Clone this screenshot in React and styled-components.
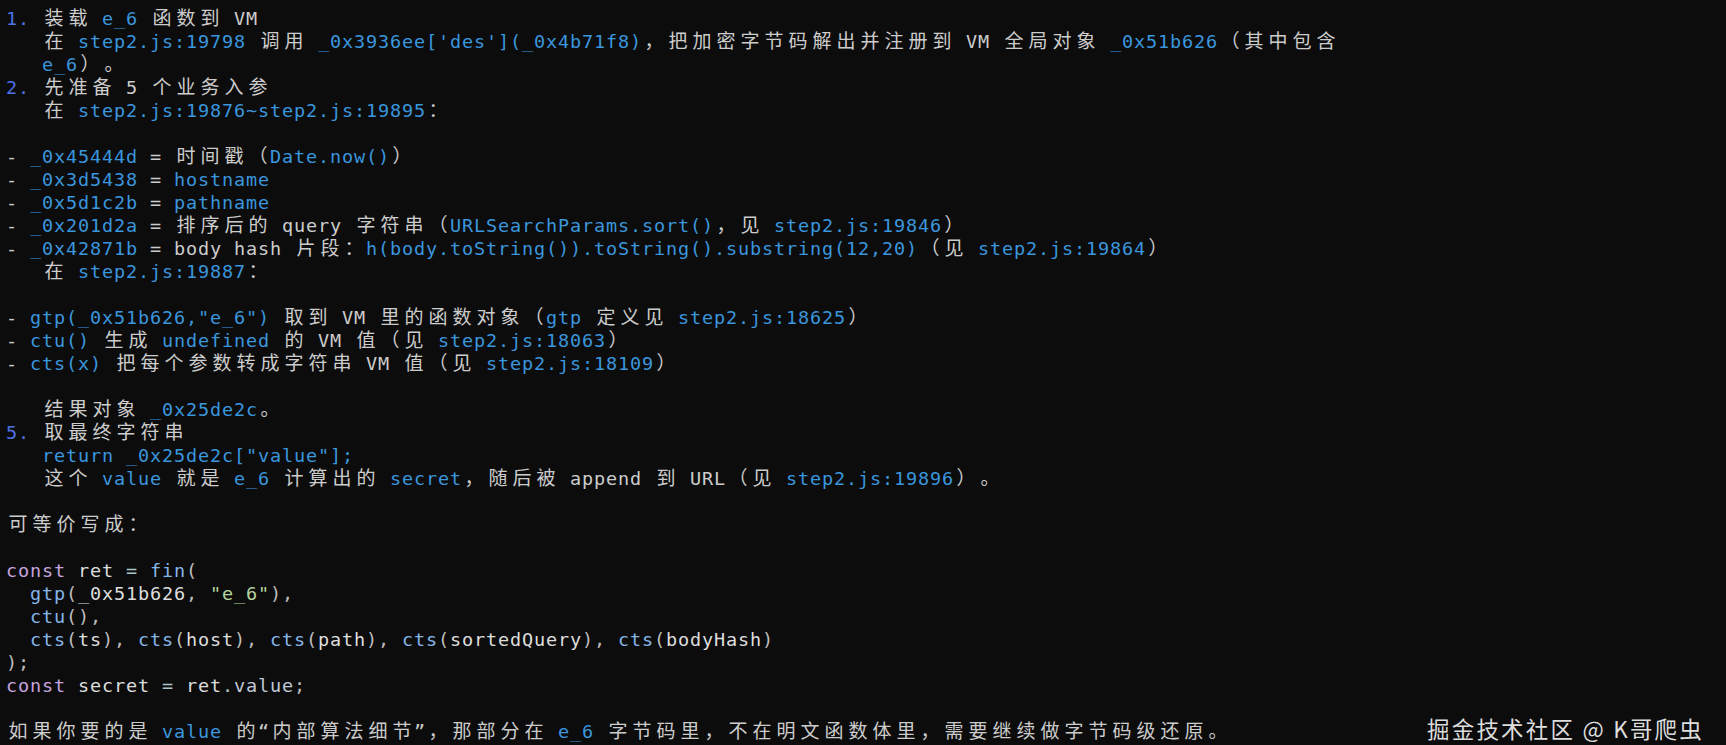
import React from "react";
import styled, { createGlobalStyle } from "styled-components";

const GlobalStyle = createGlobalStyle`
  html, body {
    margin: 0;
    padding: 0;
    background: #0c0c0c;
  }
  #root {
    min-height: 745px;
  }
`;

const Screen = styled.div`
  position: relative;
  box-sizing: border-box;
  width: 100%;
  min-height: 745px;
  padding: 7px 0 0 6px;
  background: #0c0c0c;
  color: #cccccc;
  font-family: "DejaVu Sans Mono", "Liberation Mono", monospace;
  font-size: 18.5px;
  letter-spacing: 0.862px;
  overflow: hidden;
`;

const Line = styled.div`
  height: 23px;
  line-height: 23px;
  white-space: pre;
`;

/* one double-width terminal cell holding a CJK character */
const WideChar = styled.span`
  display: inline-block;
  width: 24px;
  text-align: center;
  font-family: "Noto Sans CJK SC", "Noto Sans CJK JP", sans-serif;
  font-size: 19px;
  letter-spacing: 0;
  line-height: 16px;
`;

const COLORS = {
  t: "#cccccc",
  n: "#4c72e6",
  c: "#3a96dd",
  k: "#c6a4dd",
  f: "#86b5e8",
  v: "#dedede",
  p: "#bdbdbd",
  s: "#b5d69e",
  o: "#a9c4c4",
  pr: "#c0c8d8",
};

const Seg = styled.span`
  color: ${(p) => COLORS[p.$kind] || COLORS.t};
`;

const Watermark = styled.div`
  position: absolute;
  right: 22px;
  bottom: 2px;
  font-family: "Noto Sans CJK SC", "Noto Sans", sans-serif;
  font-size: 22.5px;
  line-height: 30px;
  letter-spacing: 2.2px;
  color: #dddddd;
  white-space: pre;
`;

const WIDE_CHAR =
  /[\u2E80-\u9FFF\uF900-\uFAFF\uFE30-\uFE4F\uFF00-\uFF60\uFFE0-\uFFE6\u3000-\u303F]/;

function renderText(text) {
  const out = [];
  let buf = "";
  Array.from(text).forEach((ch, i) => {
    if (WIDE_CHAR.test(ch)) {
      if (buf) {
        out.push(buf);
        buf = "";
      }
      out.push(<WideChar key={i}>{ch}</WideChar>);
    } else {
      buf += ch;
    }
  });
  if (buf) out.push(buf);
  return out;
}

const t = (x) => ["t", x];
const c = (x) => ["c", x];
const n = (x) => ["n", x];

const LINES = [
  [n("1."), t(" 装载 "), c("e_6"), t(" 函数到 VM")],
  [
    t("   在 "),
    c("step2.js:19798"),
    t(" 调用 "),
    c("_0x3936ee['des'](_0x4b71f8)"),
    t("，把加密字节码解出并注册到 VM 全局对象 "),
    c("_0x51b626"),
    t("（其中包含"),
  ],
  [t("   "), c("e_6"), t("）。")],
  [n("2."), t(" 先准备 5 个业务入参")],
  [t("   在 "), c("step2.js:19876~step2.js:19895"), t("：")],
  [],
  [t("- "), c("_0x45444d"), t(" = 时间戳（"), c("Date.now()"), t("）")],
  [t("- "), c("_0x3d5438"), t(" = "), c("hostname")],
  [t("- "), c("_0x5d1c2b"), t(" = "), c("pathname")],
  [
    t("- "),
    c("_0x201d2a"),
    t(" = 排序后的 query 字符串（"),
    c("URLSearchParams.sort()"),
    t("，见 "),
    c("step2.js:19846"),
    t("）"),
  ],
  [
    t("- "),
    c("_0x42871b"),
    t(" = body hash 片段："),
    c("h(body.toString()).toString().substring(12,20)"),
    t("（见 "),
    c("step2.js:19864"),
    t("）"),
  ],
  [t("   在 "), c("step2.js:19887"), t("：")],
  [],
  [
    t("- "),
    c('gtp(_0x51b626,"e_6")'),
    t(" 取到 VM 里的函数对象（"),
    c("gtp"),
    t(" 定义见 "),
    c("step2.js:18625"),
    t("）"),
  ],
  [
    t("- "),
    c("ctu()"),
    t(" 生成 "),
    c("undefined"),
    t(" 的 VM 值（见 "),
    c("step2.js:18063"),
    t("）"),
  ],
  [
    t("- "),
    c("cts(x)"),
    t(" 把每个参数转成字符串 VM 值（见 "),
    c("step2.js:18109"),
    t("）"),
  ],
  [],
  [t("   结果对象 "), c("_0x25de2c"), t("。")],
  [n("5."), t(" 取最终字符串")],
  [t("   "), c('return _0x25de2c["value"];')],
  [
    t("   这个 "),
    c("value"),
    t(" 就是 "),
    c("e_6"),
    t(" 计算出的 "),
    c("secret"),
    t("，随后被 append 到 URL（见 "),
    c("step2.js:19896"),
    t("）。"),
  ],
  [],
  [t("可等价写成：")],
  [],
  [["k", "const"], t(" "), ["v", "ret"], t(" "), ["o", "="], t(" "), ["f", "fin"], ["p", "("]],
  [
    t("  "),
    ["f", "gtp"],
    ["p", "("],
    ["v", "_0x51b626"],
    ["p", ","],
    t(" "),
    ["s", '"e_6"'],
    ["p", "),"],
  ],
  [t("  "), ["f", "ctu"], ["p", "(),"]],
  [
    t("  "),
    ["f", "cts"],
    ["p", "("],
    ["v", "ts"],
    ["p", "),"],
    t(" "),
    ["f", "cts"],
    ["p", "("],
    ["v", "host"],
    ["p", "),"],
    t(" "),
    ["f", "cts"],
    ["p", "("],
    ["v", "path"],
    ["p", "),"],
    t(" "),
    ["f", "cts"],
    ["p", "("],
    ["v", "sortedQuery"],
    ["p", "),"],
    t(" "),
    ["f", "cts"],
    ["p", "("],
    ["v", "bodyHash"],
    ["p", ")"],
  ],
  [["p", ");"]],
  [
    ["k", "const"],
    t(" "),
    ["v", "secret"],
    t(" "),
    ["o", "="],
    t(" "),
    ["v", "ret"],
    ["o", "."],
    ["pr", "value"],
    ["p", ";"],
  ],
  [],
  [
    t("如果你要的是 "),
    c("value"),
    t(" 的“内部算法细节”，那部分在 "),
    c("e_6"),
    t(" 字节码里，不在明文函数体里，需要继续做字节码级还原。"),
  ],
];

export default function App() {
  return (
    <>
      <GlobalStyle />
      <Screen>
        {LINES.map((segs, li) => (
          <Line key={li}>
            {segs.length === 0
              ? " "
              : segs.map(([kind, text], si) => (
                  <Seg key={si} $kind={kind}>
                    {renderText(text)}
                  </Seg>
                ))}
          </Line>
        ))}
        <Watermark>掘金技术社区 @ K哥爬虫</Watermark>
      </Screen>
    </>
  );
}
